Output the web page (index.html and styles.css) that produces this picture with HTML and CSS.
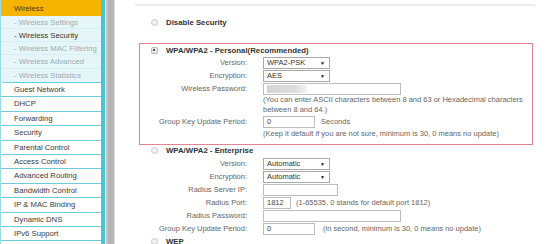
FILE: index.html
```html
<!DOCTYPE html>
<html lang="en">
<head>
    <meta charset="UTF-8">
    <title>Wireless Security</title>
    <link rel="stylesheet" href="styles.css">
</head>
<body>
    <div class="page">
        <nav class="menu">
            <div class="menu-item current">Wireless</div>
            <div class="submenu">
                <div class="sub-item">- Wireless Settings</div>
                <div class="sub-item active">- Wireless Security</div>
                <div class="sub-item">- Wireless MAC Filtering</div>
                <div class="sub-item">- Wireless Advanced</div>
                <div class="sub-item">- Wireless Statistics</div>
            </div>
            <div class="menu-item">Guest Network</div>
            <div class="menu-item">DHCP</div>
            <div class="menu-item">Forwarding</div>
            <div class="menu-item">Security</div>
            <div class="menu-item">Parental Control</div>
            <div class="menu-item">Access Control</div>
            <div class="menu-item">Advanced Routing</div>
            <div class="menu-item">Bandwidth Control</div>
            <div class="menu-item">IP &amp; MAC Binding</div>
            <div class="menu-item">Dynamic DNS</div>
            <div class="menu-item">IPv6 Support</div>
        </nav>

        <div class="scroll-strip"></div>

        <main class="content">
            <div class="top-rule"></div>

            <div class="section first">
                <div class="option"><span class="radio"></span><span class="option-title">Disable Security</span></div>
            </div>

            <div class="section selected">
                <div class="option"><span class="radio checked"></span><span class="option-title">WPA/WPA2 - Personal(Recommended)</span></div>
                <div class="field">
                    <label>Version:</label>
                    <div class="select">WPA2-PSK<span class="arrow">▼</span></div>
                </div>
                <div class="field">
                    <label>Encryption:</label>
                    <div class="select">AES<span class="arrow">▼</span></div>
                </div>
                <div class="field">
                    <label>Wireless Password:</label>
                    <div class="input wide"><span class="masked"></span></div>
                </div>
                <div class="hint double">(You can enter ASCII characters between 8 and 63 or Hexadecimal characters<br>between 8 and 64.)</div>
                <div class="field">
                    <label>Group Key Update Period:</label>
                    <div class="input short">0</div>
                    <span class="unit">Seconds</span>
                </div>
                <div class="hint single">(Keep it default if you are not sure, minimum is 30, 0 means no update)</div>
            </div>

            <div class="section">
                <div class="option compact"><span class="radio"></span><span class="option-title">WPA/WPA2 - Enterprise</span></div>
                <div class="field">
                    <label>Version:</label>
                    <div class="select">Automatic<span class="arrow">▼</span></div>
                </div>
                <div class="field">
                    <label>Encryption:</label>
                    <div class="select">Automatic<span class="arrow">▼</span></div>
                </div>
                <div class="field">
                    <label>Radius Server IP:</label>
                    <div class="input medium"></div>
                </div>
                <div class="field">
                    <label>Radius Port:</label>
                    <div class="input tiny">1812</div>
                    <span class="unit near">(1-65535, 0 stands for default port 1812)</span>
                </div>
                <div class="field">
                    <label>Radius Password:</label>
                    <div class="input wide"></div>
                </div>
                <div class="field">
                    <label>Group Key Update Period:</label>
                    <div class="input short">0</div>
                    <span class="unit far">(in second, minimum is 30, 0 means no update)</span>
                </div>
            </div>

            <div class="section">
                <div class="option compact"><span class="radio"></span><span class="option-title">WEP</span></div>
            </div>
        </main>
    </div>
</body>
</html>
```

FILE: styles.css
```css
* {
    margin: 0;
    padding: 0;
    box-sizing: border-box;
}

body {
    font-family: 'Liberation Sans', Arial, sans-serif;
    background: #fff;
    color: #333;
    height: 244px;
    overflow: hidden;
}

.page {
    display: flex;
    height: 244px;
}

/* left menu */

.menu {
    width: 105px;
    flex-shrink: 0;
    border-right: 4px solid #47c5d5;
    border-left: 1px solid #9adbe4;
    background: #fff;
}

.menu-item {
    height: 14.4px;
    line-height: 14px;
    padding-left: 13px;
    border-bottom: 1px solid #6fcdd9;
    font-size: 7.7px;
    color: #3a3a3a;
    white-space: nowrap;
}

.menu-item.current {
    height: 15.5px;
    line-height: 13px;
    padding-top: 2px;
    background: #f6b400;
    border-bottom: none;
    color: #4a3a10;
}

.submenu {
    background: #e6f6f8;
    border-bottom: 1px solid #6ccfdc;
    border-bottom-left-radius: 4px;
}

.sub-item {
    height: 13.3px;
    line-height: 13.3px;
    padding-left: 13px;
    border-bottom: 1px solid #d4f0f4;
    font-size: 7.7px;
    color: #98adb5;
    white-space: nowrap;
}

.sub-item:last-child {
    border-bottom: none;
}

.sub-item.active {
    color: #333;
}

.scroll-strip {
    width: 11px;
    flex-shrink: 0;
    background: linear-gradient(to right, #eef7f8 0 1px, #c4c4c4 1px 3px, #b5b5b5 3px 9px, #dedede 9px 10px, #fff 10px);
}

/* content */

.content {
    flex: 1;
    padding-left: 19px;
}

.top-rule {
    width: 400px;
    height: 2px;
    margin-top: 4px;
    background: #ececec;
}

.section {
    width: 394px;
    margin-left: 4px;
    border: 1px solid transparent;
}

.section.first {
    margin-top: 9px;
}

.section.selected {
    margin-top: 14px;
    border-color: #e0858f;
    padding-bottom: 5px;
}

.option {
    display: flex;
    align-items: center;
    height: 12px;
}

.option.compact {
    height: 8px;
    margin-bottom: 3px;
}

.radio {
    width: 7px;
    height: 7px;
    margin-left: 10.5px;
    margin-right: 8.5px;
    border: 1px solid #c8c8c8;
    border-radius: 50%;
    background: #f1f1f1;
    position: relative;
}

.radio.checked {
    border-radius: 1.5px;
    border-color: #b8b8b8;
    background: #e4e4e4;
}

.radio.checked::after {
    content: "";
    position: absolute;
    left: 1.5px;
    top: 1.5px;
    width: 2px;
    height: 2px;
    background: #555;
}

.option-title {
    font-size: 7.8px;
    font-weight: bold;
    color: #333;
    white-space: nowrap;
}

.field {
    display: flex;
    align-items: center;
    height: 13px;
    font-size: 7.5px;
    color: #666;
}

.field label {
    width: 107px;
    margin-right: 16px;
    text-align: right;
    white-space: nowrap;
}

.select {
    width: 67px;
    height: 12px;
    padding-left: 3px;
    display: flex;
    align-items: center;
    justify-content: space-between;
    border: 1px solid #a9a9a9;
    background: #fff;
    color: #333;
}

.arrow {
    font-size: 5px;
    padding-right: 4px;
    color: #111;
}

.input {
    height: 12px;
    padding-left: 3px;
    line-height: 10px;
    border: 1px solid #bdbdbd;
    background: #fff;
    color: #444;
}

.input.wide { width: 138px; }
.input.medium { width: 75px; }
.input.short { width: 52px; }
.input.tiny { width: 28px; }

.masked {
    display: block;
    width: 40px;
    height: 8px;
    margin-top: 1px;
    background: linear-gradient(to right, #d6d6d6, #dcdcdc 70%, #f4f4f4);
}

.unit {
    margin-left: 6px;
    white-space: nowrap;
}

.unit.near { margin-left: 5px; }
.unit.far { margin-left: 8px; }

.hint {
    padding-left: 123px;
    font-size: 7.5px;
    color: #666;
    white-space: nowrap;
}

.hint.double { line-height: 10px; }
.hint.single { line-height: 11px; }
```
